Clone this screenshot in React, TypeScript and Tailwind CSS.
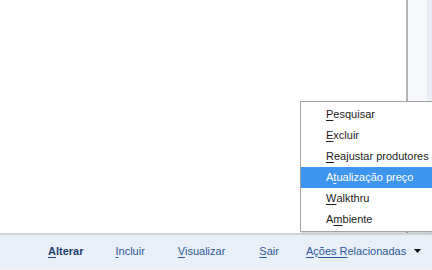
import React from 'react';

interface MenuItem {
  label: string;
  key: number;
  active?: boolean;
}

const menuItems: MenuItem[] = [
  { label: 'Pesquisar', key: 0 },
  { label: 'Excluir', key: 0 },
  { label: 'Reajustar produtores', key: 0 },
  { label: 'Atualização preço', key: 1, active: true },
  { label: 'Walkthru', key: 0 },
  { label: 'Ambiente', key: 1 },
];

// underline the access-key letter
function AccessKey({ text, index }: { text: string; index: number }) {
  return (
    <>
      {text.slice(0, index)}
      <span className="underline underline-offset-2">{text[index]}</span>
      {text.slice(index + 1)}
    </>
  );
}

export default function App() {
  return (
    <div className="relative flex h-[270px] w-[432px] flex-col overflow-hidden bg-white font-['Liberation_Sans',Arial,sans-serif] text-[11px]">
      {/* Content area with side panel */}
      <div className="flex flex-1">
        <div className="flex-1 bg-white" />
        <div className="flex w-[26px] border-l-2 border-[#b4b4b4] bg-[#f6f8fb]">
          <div className="flex-1" />
          <div className="w-[5px] bg-[#e9eef6]" />
        </div>
      </div>

      {/* Button bar */}
      <div className="flex h-[37px] items-center border-t-2 border-[#cfd3d9] border-b border-b-[#f3f5f8] bg-[#e9eff6] pb-[2px] text-[#2b5a9c]">
        <span className="ml-[48px] font-bold text-[#1f3f70]">
          <AccessKey text="Alterar" index={0} />
        </span>
        <span className="ml-[32px]">
          <AccessKey text="Incluir" index={0} />
        </span>
        <span className="ml-[33px]">
          <AccessKey text="Visualizar" index={0} />
        </span>
        <span className="ml-[34px]">
          <AccessKey text="Sair" index={0} />
        </span>
        <span className="ml-[27px]">
          <span className="underline underline-offset-2">Ações R</span>elacionadas
        </span>
        <svg className="ml-[8px]" width="7" height="4" viewBox="0 0 7 4">
          <path d="M0 0h7L3.5 4z" fill="#111" />
        </svg>
      </div>

      {/* Dropdown menu */}
      <div className="absolute left-[300px] top-[101px] w-[140px] border border-[#a3a3a3] bg-white pt-[2px] pb-[1px] shadow-[1px_1px_1px_rgba(0,0,0,0.15)]">
        {menuItems.map((item) => (
          <div
            key={item.label}
            className={`flex h-[21px] items-center pl-[25px] ${
              item.active ? 'bg-[#3d95ee] text-white' : 'text-[#1c1c1c]'
            }`}
          >
            <AccessKey text={item.label} index={item.key} />
          </div>
        ))}
      </div>
    </div>
  );
}
